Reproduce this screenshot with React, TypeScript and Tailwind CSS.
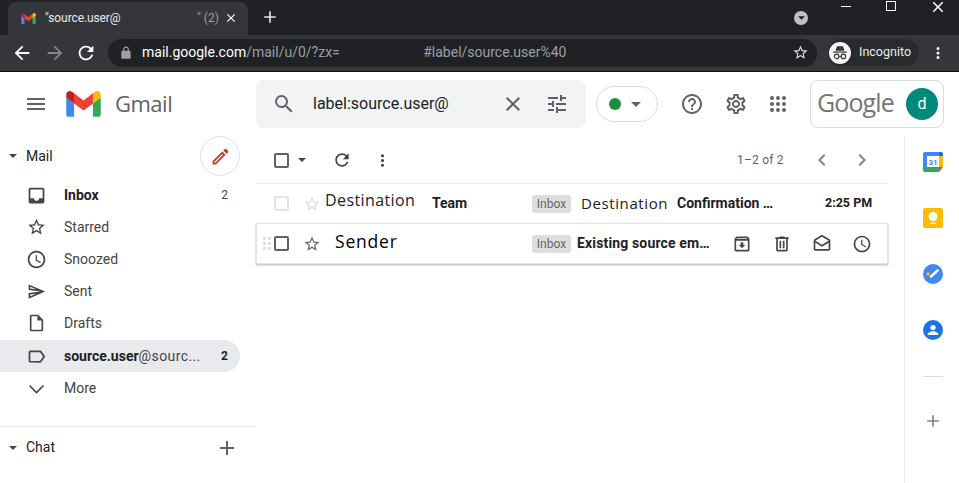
import React from "react";

const P = {
  menu: "M3 18h18v-2H3v2zm0-5h18v-2H3v2zm0-7v2h18V6H3z",
  search: "M15.5 14h-.79l-.28-.27A6.471 6.471 0 0 0 16 9.5 6.5 6.5 0 1 0 9.5 16c1.61 0 3.09-.59 4.23-1.57l.27.28v.79l5 4.99L20.49 19l-4.99-5zm-6 0C7.01 14 5 11.99 5 9.5S7.01 5 9.5 5 14 7.01 14 9.5 11.99 14 9.5 14z",
  close: "M19 6.41L17.59 5 12 10.59 6.41 5 5 6.41 10.59 12 5 17.59 6.41 19 12 13.41 17.59 19 19 17.59 13.41 12z",
  tune: "M3 17v2h6v-2H3zM3 5v2h10V5H3zm10 16v-2h8v-2h-8v-2h-2v6h2zM7 9v2H3v2h4v2h2V9H7zm14 4v-2H11v2h10zm-6-4h2V7h4V5h-4V3h-2v6z",
  help: "M11 18h2v-2h-2v2zm1-16C6.48 2 2 6.48 2 12s4.48 10 10 10 10-4.48 10-10S17.52 2 12 2zm0 18c-4.41 0-8-3.59-8-8s3.59-8 8-8 8 3.59 8 8-3.59 8-8 8zm0-14c-2.21 0-4 1.79-4 4h2c0-1.1.9-2 2-2s2 .9 2 2c0 2-3 1.75-3 5h2c0-2.25 3-2.5 3-5 0-2.21-1.79-4-4-4z",
  gear: "M19.43 12.98c.04-.32.07-.64.07-.98 0-.34-.03-.66-.07-.98l2.11-1.65c.19-.15.24-.42.12-.64l-2-3.46c-.09-.16-.26-.25-.44-.25-.06 0-.12.01-.17.03l-2.49 1c-.52-.4-1.08-.73-1.69-.98l-.38-2.65C14.46 2.18 14.25 2 14 2h-4c-.25 0-.46.18-.49.42l-.38 2.65c-.61.25-1.17.59-1.69.98l-2.49-1c-.06-.02-.12-.03-.18-.03-.17 0-.34.09-.43.25l-2 3.46c-.13.22-.07.49.12.64l2.11 1.65c-.04.32-.07.65-.07.98 0 .33.03.66.07.98l-2.11 1.65c-.19.15-.24.42-.12.64l2 3.46c.09.16.26.25.44.25.06 0 .12-.01.17-.03l2.49-1c.52.4 1.08.73 1.69.98l.38 2.65c.03.24.24.42.49.42h4c.25 0 .46-.18.49-.42l.38-2.65c.61-.25 1.17-.59 1.69-.98l2.49 1c.06.02.12.03.18.03.17 0 .34-.09.43-.25l2-3.46c.12-.22.07-.49-.12-.64l-2.11-1.65zm-1.98-1.71c.04.31.05.52.05.73 0 .21-.02.43-.05.73l-.14 1.13.89.7 1.08.84-.7 1.21-1.27-.51-1.04-.42-.9.68c-.43.32-.84.56-1.25.73l-1.06.43-.16 1.13-.2 1.35h-1.4l-.19-1.35-.16-1.13-1.06-.43c-.43-.18-.83-.41-1.23-.71l-.91-.7-1.06.43-1.27.51-.7-1.21 1.08-.84.89-.7-.14-1.13c-.03-.31-.05-.54-.05-.74s.02-.43.05-.73l.14-1.13-.89-.7-1.08-.84.7-1.21 1.27.51 1.04.42.9-.68c.43-.32.84-.56 1.25-.73l1.06-.43.16-1.13.2-1.35h1.39l.19 1.35.16 1.13 1.06.43c.43.18.83.41 1.23.71l.91.7 1.06-.43 1.27-.51.7 1.21-1.07.85-.89.7.14 1.13zM12 8c-2.21 0-4 1.79-4 4s1.79 4 4 4 4-1.79 4-4-1.79-4-4-4zm0 6c-1.1 0-2-.9-2-2s.9-2 2-2 2 .9 2 2-.9 2-2 2z",
  apps: "M6 8a2 2 0 1 0 0-4 2 2 0 0 0 0 4zm6 0a2 2 0 1 0 0-4 2 2 0 0 0 0 4zm6 0a2 2 0 1 0 0-4 2 2 0 0 0 0 4zM6 14a2 2 0 1 0 0-4 2 2 0 0 0 0 4zm6 0a2 2 0 1 0 0-4 2 2 0 0 0 0 4zm6 0a2 2 0 1 0 0-4 2 2 0 0 0 0 4zM6 20a2 2 0 1 0 0-4 2 2 0 0 0 0 4zm6 0a2 2 0 1 0 0-4 2 2 0 0 0 0 4zm6 0a2 2 0 1 0 0-4 2 2 0 0 0 0 4z",
  inbox: "M19 3H4.99c-1.11 0-1.98.89-1.98 2L3 19c0 1.1.88 2 1.99 2H19c1.1 0 2-.9 2-2V5c0-1.11-.9-2-2-2zm0 12h-4c0 1.66-1.35 3-3 3s-3-1.34-3-3H4.99V5H19v10z",
  star: "M22 9.24l-7.19-.62L12 2 9.19 8.63 2 9.24l5.46 4.73L5.82 21 12 17.27 18.18 21l-1.63-7.03L22 9.24zM12 15.4l-3.76 2.27 1-4.28-3.32-2.88 4.38-.38L12 6.1l1.71 4.04 4.38.38-3.32 2.88 1 4.28L12 15.4z",
  clock: "M11.99 2C6.47 2 2 6.48 2 12s4.47 10 9.99 10C17.52 22 22 17.52 22 12S17.52 2 11.99 2zM12 20c-4.42 0-8-3.58-8-8s3.58-8 8-8 8 3.58 8 8-3.58 8-8 8zm.5-13H11v6l5.25 3.15.75-1.23-4.5-2.67z",
  sent: "M4.01 6.03l7.51 3.22-7.52-1 .01-2.22m7.5 8.72L4 17.97v-2.22l7.51-1M2.01 3L2 10l15 2-15 2 .01 7L23 12 2.01 3z",
  draft: "M14 2H6c-1.1 0-1.99.9-1.99 2L4 20c0 1.1.89 2 1.99 2H18c1.1 0 2-.9 2-2V8l-6-6zM6 20V4h7v5h5v11H6z",
  label: "M17.63 5.84C17.27 5.33 16.67 5 16 5L5 5.01C3.9 5.01 3 5.9 3 7v10c0 1.1.9 1.99 2 1.99L16 19c.67 0 1.27-.33 1.63-.84L22 12l-4.37-6.16zM16 17H5V7h11l3.55 5L16 17z",
  plus: "M19 13h-6v6h-2v-6H5v-2h6V5h2v6h6v2z",
  refresh: "M17.65 6.35C16.2 4.9 14.21 4 12 4c-4.42 0-7.99 3.58-7.99 8s3.57 8 7.99 8c3.73 0 6.84-2.55 7.73-6h-2.08c-.82 2.33-3.04 4-5.65 4-3.31 0-6-2.69-6-6s2.69-6 6-6c1.66 0 3.14.69 4.22 1.78L13 11h7V4l-2.35 2.35z",
  dots: "M12 8a2 2 0 1 0 0-4 2 2 0 0 0 0 4zm0 2a2 2 0 1 0 0 4 2 2 0 0 0 0-4zm0 6a2 2 0 1 0 0 4 2 2 0 0 0 0-4z",
  prev: "M15.41 7.41L14 6l-6 6 6 6 1.41-1.41L10.83 12z",
  next: "M10 6L8.59 7.41 13.17 12l-4.58 4.59L10 18l6-6z",
  archive: "M20.54 5.23l-1.39-1.68C18.88 3.21 18.47 3 18 3H6c-.47 0-.88.21-1.16.55L3.46 5.23C3.17 5.57 3 6.02 3 6.5V19c0 1.1.9 2 2 2h14c1.1 0 2-.9 2-2V6.5c0-.48-.17-.93-.46-1.27zM6.24 5h11.52l.81.97H5.44l.8-.97zM5 19V8h14v11H5zm8.45-9h-2.9v3H8l4 4 4-4h-2.55z",
  trash: "M15 4V3H9v1H4v2h1v13c0 1.1.9 2 2 2h10c1.1 0 2-.9 2-2V6h1V4h-5zm2 15H7V6h10v13zM9 8h2v9H9zm4 0h2v9h-2z",
  open: "M21.99 8c0-.72-.37-1.35-.94-1.7L12 1 2.95 6.3C2.38 6.65 2 7.28 2 8v10c0 1.1.9 2 2 2h16c1.1 0 2-.9 2-2l-.01-10zM20 8v.01L12 13 4 8l8-4.68L20 8zM4 18v-7.66l8 5.02 7.99-4.99L20 18H4z",
  edit: "M14.06 9.02l.92.92L5.92 19H5v-.92l9.06-9.06M17.66 3c-.25 0-.51.1-.7.29l-1.83 1.83 3.75 3.75 1.83-1.83c.39-.39.39-1.02 0-1.41l-2.34-2.34c-.2-.2-.45-.29-.71-.29zm-3.6 3.19L3 17.25V21h3.75L17.81 9.94l-3.75-3.75z",
  back: "M20 11H7.83l5.59-5.59L12 4l-8 8 8 8 1.41-1.41L7.83 13H20v-2z",
  forward: "M12 4l-1.41 1.41L16.17 11H4v2h12.17l-5.58 5.59L12 20l8-8z",
  lock: "M18 8h-1V6c0-2.76-2.24-5-5-5S7 3.24 7 6v2H6c-1.1 0-2 .9-2 2v10c0 1.1.9 2 2 2h12c1.1 0 2-.9 2-2V10c0-1.1-.9-2-2-2zM9 6c0-1.66 1.34-3 3-3s3 1.34 3 3v2H9V6z",
};

const Icon = ({ d, className }: { d: string; className: string }) => (
  <svg viewBox="0 0 24 24" fill="currentColor" className={`shrink-0 ${className}`}>
    <path d={d} />
  </svg>
);

const Caret = ({ className }: { className: string }) => (
  <svg viewBox="0 0 10 5" fill="currentColor" className={`shrink-0 ${className}`}>
    <path d="M0 0h10L5 5z" />
  </svg>
);

const GmailLogo = ({ className }: { className: string }) => (
  <svg viewBox="0 0 256 193" className={`shrink-0 ${className}`}>
    <path fill="#4285F4" d="M58.18 192.05V93.14L27.5 65.08 0 49.5v125.1c0 9.65 7.82 17.45 17.45 17.45h40.73z" />
    <path fill="#34A853" d="M197.82 192.05h40.73c9.65 0 17.45-7.82 17.45-17.45V49.5l-31.16 17.84-27.02 25.8v98.91z" />
    <path fill="#EA4335" d="M58.18 93.14l-4.17-38.65 4.17-36.99L128 69.87l69.82-52.37 4.67 34.99-4.67 40.65L128 145.5z" />
    <path fill="#FBBC04" d="M197.82 17.5v75.64L256 49.5V26.23c0-21.59-24.64-33.89-41.89-20.95l-16.29 12.22z" />
    <path fill="#C5221F" d="M0 49.5l26.76 20.07L58.18 93.14V17.5L41.89 5.28C24.61-7.66 0 4.64 0 26.23V49.5z" />
  </svg>
);

const TabBar = () => (
  <div className="flex h-[35px] items-end bg-[#202124] pl-2 text-[#e8eaed]">
    <div className="flex h-[33px] w-[240px] items-center rounded-t-lg bg-[#35363a] pb-px pl-[13px] text-[12px]">
      <GmailLogo className="h-[11px] w-[15px]" />
      <span className="ml-[9px] w-[152px] whitespace-nowrap tracking-[-0.1px]">"source.user@</span>
      <span className="w-[21px] whitespace-nowrap text-[#9aa0a6]">" (2)</span>
      <Icon d={P.close} className="ml-[6px] h-[14px] w-[14px] text-white" />
    </div>
    <Icon d={P.plus} className="mb-[8px] ml-[12px] h-[20px] w-[20px] text-[#dee1e6]" />
    <div className="mb-[10px] ml-[514px] flex h-[14px] w-[14px] items-center justify-center rounded-full bg-[#bdc1c6]">
      <Caret className="h-[4px] w-[7px] text-[#202124]" />
    </div>
    {/* window buttons */}
    <div className="mb-[28px] ml-[33px] h-px w-[10px] bg-white" />
    <div className="mb-[24px] ml-[35px] h-[10px] w-[10px] border border-white" />
    <Icon d={P.close} className="mb-[19px] ml-[33px] h-[18px] w-[18px] text-white" />
  </div>
);

const Toolbar = () => (
  <div className="flex h-[37px] items-center border-b border-[#111] bg-[#35363a] pb-px text-[#e8eaed]">
    <Icon d={P.back} className="ml-[11px] h-[22px] w-[22px] text-white" />
    <Icon d={P.forward} className="ml-[11px] h-[22px] w-[22px] text-[#80868b]" />
    <Icon d={P.refresh} className="ml-[9px] h-[22px] w-[22px] text-white" />
    <div className="ml-[11px] flex h-[28px] w-[709px] items-center rounded-full bg-[#202124] pl-[11px] text-[14px]">
      <Icon d={P.lock} className="h-[14px] w-[14px] text-[#9aa0a6]" />
      <span className="ml-[9px] text-white">mail.google.com</span>
      <span className="w-[177px] text-[#9aa0a6]">/mail/u/0/?zx=</span>
      <span className="text-[#9aa0a6]">#label/source.user%40</span>
      <Icon d={P.star} className="ml-auto mr-[8px] h-[17px] w-[17px] text-[#dadce0]" />
    </div>
    <div className="ml-[11px] flex h-[27px] w-[91px] items-center rounded-full bg-[#292a2d] pl-px text-[12.5px]">
      <div className="flex h-[22px] w-[22px] items-center justify-center rounded-full bg-[#f1f3f4]">
        <svg viewBox="0 0 24 24" className="h-[18px] w-[18px] text-[#35363a]" fill="currentColor">
          <path d="M8 3h8l2 6H6zM3 10h18v1.5H3z" />
          <circle cx="7.5" cy="16.5" r="3" fill="none" stroke="currentColor" strokeWidth="1.5" />
          <circle cx="16.5" cy="16.5" r="3" fill="none" stroke="currentColor" strokeWidth="1.5" />
          <path d="M10.5 16h3v1.2h-3z" />
        </svg>
      </div>
      <span className="ml-[8px] text-[#e8eaed]">Incognito</span>
    </div>
    <Icon d={P.dots} className="ml-[10px] h-[18px] w-[18px] text-white" />
  </div>
);

const GmailHeader = () => (
  <div className="flex h-[64px] items-center bg-white">
    <div className="flex w-[256px] items-center pl-6">
      <Icon d={P.menu} className="h-6 w-6 text-[#5f6368]" />
      <GmailLogo className="ml-[18px] h-[26px] w-[35px]" />
      <span className="mb-[2px] ml-[14px] font-['Open_Sans',sans-serif] text-[22px] leading-none tracking-[-0.5px] text-[#5f6368]">Gmail</span>
    </div>
    <div className="flex h-12 w-[330px] items-center rounded-lg bg-[#f1f3f4] text-[#5f6368]">
      <Icon d={P.search} className="ml-[16px] h-6 w-6" />
      <span className="ml-[17px] w-[188px] text-[16px] text-[#202124]">label:source.user@</span>
      <Icon d={P.close} className="h-6 w-6" />
      <Icon d={P.tune} className="ml-[20px] h-6 w-6" />
    </div>
    <div className="ml-[10px] flex h-[36px] w-[62px] items-center rounded-full border border-[#dadce0] pl-[12px]">
      <div className="h-3 w-3 rounded-full bg-[#1e8e3e]" />
      <Caret className="ml-[10px] h-[5px] w-[10px] text-[#5f6368]" />
    </div>
    <Icon d={P.help} className="ml-[22px] h-6 w-6 text-[#5f6368]" />
    <Icon d={P.gear} className="ml-[20px] h-6 w-6 text-[#5f6368]" />
    <Icon d={P.apps} className="ml-[18px] h-6 w-6 text-[#5f6368]" />
    <div className="ml-[20px] flex h-12 w-[134px] items-center rounded-lg border border-[#dadce0] pl-[6px]">
      <span className="mb-[3px] font-['Open_Sans',sans-serif] text-[25px] leading-none tracking-[-0.9px] text-[#757575]">Google</span>
      <div className="ml-auto mr-[5px] flex h-8 w-8 items-center justify-center rounded-full bg-[#00897b] text-[16px] text-white">d</div>
    </div>
  </div>
);

const navItems = [
  { icon: P.inbox, label: "Inbox", count: "2", bold: true, size: "h-[21px] w-[21px]" },
  { icon: P.star, label: "Starred", size: "h-[20px] w-[21px]" },
  { icon: P.clock, label: "Snoozed", size: "h-[21px] w-[21px]" },
  { icon: P.sent, label: "Sent", size: "h-[19px] w-[21px]" },
  { icon: P.draft, label: "Drafts", size: "h-[20px] w-[21px]" },
];

const Sidebar = () => (
  <div className="flex w-[256px] shrink-0 flex-col text-[14px] text-[#202124]">
    <div className="flex h-[40px] items-center pl-[9px]">
      <Caret className="h-[4px] w-[8px] text-[#444]" />
      <span className="ml-[9px] text-[#202124]">Mail</span>
      <div className="ml-auto mr-[16px] flex h-10 w-10 items-center justify-center rounded-full border border-[#e0e0e0]">
        <Icon d={P.edit} className="h-[21px] w-[21px] text-[#d93025]" />
      </div>
    </div>
    <div className="mt-[3px] flex flex-col">
      {navItems.map((n) => (
        <div key={n.label} className="flex h-8 w-[240px] items-center pl-[26px] pr-[12px]">
          <Icon d={n.icon} className={`${n.size} text-[#444746]`} />
          <span className={`ml-[17px] ${n.bold ? "font-bold" : "text-[#444]"}`}>{n.label}</span>
          {n.count && <span className="ml-auto text-[12px] text-[#444]">{n.count}</span>}
        </div>
      ))}
      <div className="mt-px flex h-8 w-[240px] items-center rounded-r-full bg-[#e8eaed] pl-[26px] pr-[12px]">
        <Icon d={P.label} className="h-[21px] w-[21px] text-[#444746]" />
        <span className="ml-[17px] font-bold">source.user</span>
        <span className="tracking-[0.4px] text-[#444]">@sourc...</span>
        <span className="ml-auto text-[12px] font-bold">2</span>
      </div>
      <div className="flex h-8 w-[240px] items-center pl-[26px]">
        <svg viewBox="0 0 21 21" fill="none" stroke="#444746" strokeWidth="1.6" className="h-[21px] w-[21px] shrink-0">
          <path d="M3.5 7.5l7 7 7-7" />
        </svg>
        <span className="ml-[17px] text-[#444]">More</span>
      </div>
    </div>
    <div className="mt-[22px] flex h-[42px] items-center border-t border-[#e8eaed] pl-[9px]">
      <Caret className="h-[4px] w-[8px] text-[#444]" />
      <span className="ml-[9px] text-[#202124]">Chat</span>
      <Icon d={P.plus} className="ml-auto mr-[17px] h-6 w-6 text-[#5f6368]" />
    </div>
  </div>
);

const Chip = () => (
  <span className="flex h-[18px] w-[39px] shrink-0 items-center justify-center rounded-[3px] bg-[#dddddd] text-[12px] text-[#666]">Inbox</span>
);

const DragDots = () => (
  <svg viewBox="0 0 9 14" fill="#dcdcdc" className="ml-[6px] h-[14px] w-[9px] shrink-0">
    <rect x="0" y="0" width="3" height="3" rx="1" />
    <rect x="5" y="0" width="3" height="3" rx="1" />
    <rect x="0" y="5" width="3" height="3" rx="1" />
    <rect x="5" y="5" width="3" height="3" rx="1" />
    <rect x="0" y="10" width="3" height="3" rx="1" />
    <rect x="5" y="10" width="3" height="3" rx="1" />
  </svg>
);

const MailList = () => (
  <div className="flex w-[632px] shrink-0 flex-col text-[#202124]">
    <div className="flex h-[48px] items-center border-b border-[#eceff1] pt-px text-[#5f6368]">
      <div className="ml-[18px] h-[15px] w-[15px] rounded-[2px] border-2 border-[#5f6368]" />
      <Caret className="ml-[9px] h-[4px] w-[8px] text-[#444]" />
      <Icon d={P.refresh} className="ml-[26px] h-[20px] w-[20px] text-[#444]" />
      <Icon d={P.dots} className="ml-[21px] h-[19px] w-[19px] text-[#444]" />
      <span className="ml-[345px] w-[47px] whitespace-nowrap text-[12px] tracking-[0.2px]">1–2 of 2</span>
      <Icon d={P.prev} className="ml-[26px] h-6 w-6 text-[#80868b]" />
      <Icon d={P.next} className="ml-[16px] h-6 w-6 text-[#80868b]" />
    </div>
    <div className="flex h-[39px] items-center">
      <div className="ml-[18px] h-[15px] w-[15px] rounded-[2px] border-2 border-[#e3e3e3]" />
      <Icon d={P.star} className="ml-[14px] h-[18px] w-[18px] text-[#dadce0]" />
      <span className="mb-[7px] ml-[4px] w-[107px] font-['Open_Sans',sans-serif] text-[16px] tracking-[0.4px]">Destination</span>
      <span className="w-[100px] text-[14px] font-bold">Team</span>
      <Chip />
      <span className="ml-[10px] w-[96px] whitespace-nowrap font-['Open_Sans',sans-serif] text-[15px] tracking-[0.6px]">Destination</span>
      <span className="w-[148px] whitespace-nowrap text-[14px] font-bold">Confirmation …</span>
      <span className="whitespace-nowrap text-[12.5px] font-bold">2:25 PM</span>
    </div>
    <div className="flex h-[41px] items-center border border-[#e3e4e6] shadow-[0_1px_2px_rgba(60,64,67,0.4)]">
      <DragDots />
      <div className="ml-[2px] h-[15px] w-[15px] rounded-[2px] border-2 border-[#5f6368]" />
      <Icon d={P.star} className="ml-[14px] h-[18px] w-[18px] text-[#5f6368]" />
      <span className="mb-[4px] ml-[14px] w-[197px] font-['Open_Sans',sans-serif] text-[17.5px] tracking-[0.8px] text-black">Sender</span>
      <Chip />
      <span className="ml-[6px] w-[155px] whitespace-nowrap text-[14px] font-bold tracking-[0.15px]">Existing source em…</span>
      <Icon d={P.archive} className="h-5 w-5 text-[#444]" />
      <Icon d={P.trash} className="ml-5 h-5 w-5 text-[#444]" />
      <Icon d={P.open} className="ml-5 h-5 w-5 text-[#444]" />
      <Icon d={P.clock} className="ml-5 h-5 w-5 text-[#444]" />
    </div>
  </div>
);

const RightRail = () => (
  <div className="ml-[16px] flex w-[55px] flex-col items-center border-l border-[#ececec] pl-[2px] pt-[16px]">
    <svg viewBox="0 0 20 20" className="h-5 w-5">
      <path fill="#4285F4" d="M0 2a2 2 0 0 1 2-2h14v4H4v11H0z" />
      <path fill="#1967D2" d="M16 0h2a2 2 0 0 1 2 2v2h-4z" />
      <path fill="#FBBC04" d="M16 4h4v11h-4z" />
      <path fill="#34A853" d="M0 15h16v5H2a2 2 0 0 1-2-2z" />
      <path fill="#EA4335" d="M16 15h4l-4 5z" />
      <rect x="4" y="4" width="12" height="11" fill="#fff" />
      <text x="10" y="12.5" textAnchor="middle" fontSize="8" fontWeight="700" fill="#4285F4" fontFamily="Roboto, sans-serif">31</text>
    </svg>
    <div className="mt-[36px] flex h-[20px] w-[20px] items-center justify-center rounded-[2px] bg-[#fbbc04]">
      <svg viewBox="0 0 20 20" className="h-5 w-5" fill="#fff">
        <circle cx="10" cy="8.5" r="4.5" />
        <rect x="7.5" y="14.5" width="5" height="1.6" />
      </svg>
    </div>
    <svg viewBox="0 0 20 20" className="mt-[36px] h-5 w-5">
      <circle cx="10" cy="10" r="10" fill="#4285F4" />
      <path d="M8 12.5l6.5-6" stroke="#fff" strokeWidth="2.6" strokeLinecap="round" />
      <circle cx="5" cy="10" r="1.8" fill="#FBBC04" />
    </svg>
    <svg viewBox="0 0 20 20" className="mt-[36px] h-5 w-5">
      <circle cx="10" cy="10" r="10" fill="#1a73e8" />
      <circle cx="10" cy="7.5" r="2.6" fill="#fff" />
      <path d="M4.5 15c0-2.6 3.2-3.8 5.5-3.8s5.5 1.2 5.5 3.8z" fill="#fff" />
    </svg>
    <div className="mt-[36px] h-px w-5 bg-[#dadce0]" />
    <Icon d={P.plus} className="mt-[34px] h-[20px] w-[20px] text-[#80868b]" />
  </div>
);

export default function App() {
  return (
    <div className="flex h-[483px] w-[959px] flex-col overflow-hidden bg-white font-['Roboto',sans-serif]">
      <TabBar />
      <Toolbar />
      <GmailHeader />
      <div className="flex min-h-0 flex-1">
        <Sidebar />
        <MailList />
        <RightRail />
      </div>
    </div>
  );
}
